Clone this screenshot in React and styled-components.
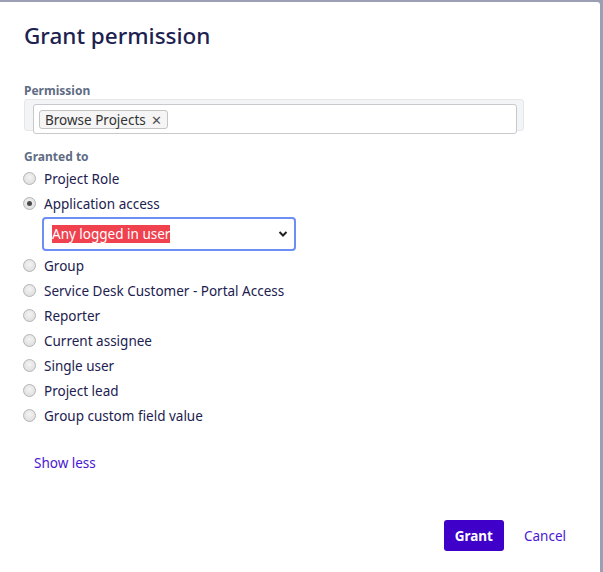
import React from "react";
import styled, { createGlobalStyle } from "styled-components";

const Global = createGlobalStyle`
  html, body { margin: 0; padding: 0; background: #9c9fb3; overflow: hidden; }
  body { font-family: "Noto Sans", "Open Sans", sans-serif; }
`;

const Dialog = styled.div`
  box-sizing: border-box;
  width: 600px;
  height: 570px;
  margin-top: 2px;
  background: #fff;
  border-radius: 0 3px 0 0;
  padding: 20px 24px 0 24px;
  display: flex;
  flex-direction: column;
  color: #172b4d;
`;

const Title = styled.h1`
  margin: 0;
  font-size: 22.5px;
  font-weight: 500;
  line-height: 28px;
  color: #1c2150;
`;

const Label = styled.div`
  font-size: 12px;
  font-weight: 700;
  color: #5e6c84;
  line-height: 14px;
  margin-top: ${(p) => p.$top}px;
`;

const FieldFrame = styled.div`
  box-sizing: border-box;
  width: 500px;
  height: 32px;
  margin-top: 1px;
  background: #f3f4f6;
  border: 1px solid #e6e7ea;
  border-radius: 3px;
  padding: 4px 0 0 8px;
`;

const Input = styled.div`
  box-sizing: border-box;
  width: 484px;
  height: 30px;
  background: #fff;
  border: 1px solid #c8c9cc;
  border-radius: 3px;
  padding: 5px 0 0 5px;
  display: flex;
  align-items: flex-start;
`;

const Tag = styled.span`
  display: inline-flex;
  align-items: center;
  gap: 5px;
  height: 17px;
  padding: 0 5px;
  border: 1px solid #c4c4c4;
  background: #f5f5f5;
  border-radius: 3px;
  font-size: 13.5px;
  color: #333;
`;

const Remove = styled.span`
  font-size: 13px;
  color: #555;
`;

const RadioList = styled.div`
  display: flex;
  flex-direction: column;
  margin-top: 2px;
`;

const RadioRow = styled.label`
  display: flex;
  align-items: center;
  height: 25px;
  gap: 8px;
  font-size: 13.5px;
  color: #1c2150;
`;

const Radio = styled.span`
  box-sizing: border-box;
  width: 13px;
  height: 13px;
  border-radius: 50%;
  border: 1px solid #b4b4b4;
  background: radial-gradient(circle at 50% 40%, #f4f4f4, #d9d9d9);
  display: flex;
  align-items: center;
  justify-content: center;
  margin-left: -1px;
  &::after {
    content: "";
    display: ${(p) => (p.$checked ? "block" : "none")};
    width: 5px;
    height: 5px;
    border-radius: 50%;
    background: #4a4a4a;
  }
`;

const Select = styled.div`
  box-sizing: border-box;
  width: 254px;
  height: 34px;
  margin: 1px 0 2px 18px;
  border: 2px solid #6c8ef5;
  border-radius: 4px;
  display: flex;
  align-items: center;
  justify-content: space-between;
  padding: 0 6px 0 8px;
`;

const Highlight = styled.span`
  background: #f0414f;
  color: #fff;
  font-size: 13.5px;
  line-height: 18px;
`;

const ShowLess = styled.a`
  margin: 26px 0 0 10px;
  font-size: 13.5px;
  color: #4a16d4;
  text-decoration: none;
`;

const Footer = styled.div`
  display: flex;
  justify-content: flex-end;
  align-items: center;
  gap: 20px;
  margin-top: 48px;
  padding-right: 10px;
`;

const GrantButton = styled.button`
  height: 31px;
  padding: 0 11px;
  border: none;
  border-radius: 3px;
  background: #3f00c9;
  color: #fff;
  font-family: inherit;
  font-size: 13.5px;
  font-weight: 700;
`;

const CancelLink = styled.a`
  font-size: 13.5px;
  color: #4a16d4;
`;

const options = [
  "Project Role",
  "Application access",
  "Group",
  "Service Desk Customer - Portal Access",
  "Reporter",
  "Current assignee",
  "Single user",
  "Project lead",
  "Group custom field value",
];

export default function App() {
  return (
    <>
      <Global />
      <Dialog>
        <Title>Grant permission</Title>
        <Label $top={34}>Permission</Label>
        <FieldFrame>
          <Input>
            <Tag>
              Browse Projects <Remove>✕</Remove>
            </Tag>
          </Input>
        </FieldFrame>
        <Label $top={19}>Granted to</Label>
        <RadioList>
          {options.map((o) => (
            <React.Fragment key={o}>
              <RadioRow>
                <Radio $checked={o === "Application access"} />
                {o}
              </RadioRow>
              {o === "Application access" && (
                <Select>
                  <Highlight>Any logged in user</Highlight>
                  <svg width="10" height="8" viewBox="0 0 10 8">
                    <path d="M1.5 2 L5 5.5 L8.5 2" stroke="#222" strokeWidth="2" fill="none" />
                  </svg>
                </Select>
              )}
            </React.Fragment>
          ))}
        </RadioList>
        <ShowLess href="#">Show less</ShowLess>
        <Footer>
          <GrantButton>Grant</GrantButton>
          <CancelLink>Cancel</CancelLink>
        </Footer>
      </Dialog>
    </>
  );
}
